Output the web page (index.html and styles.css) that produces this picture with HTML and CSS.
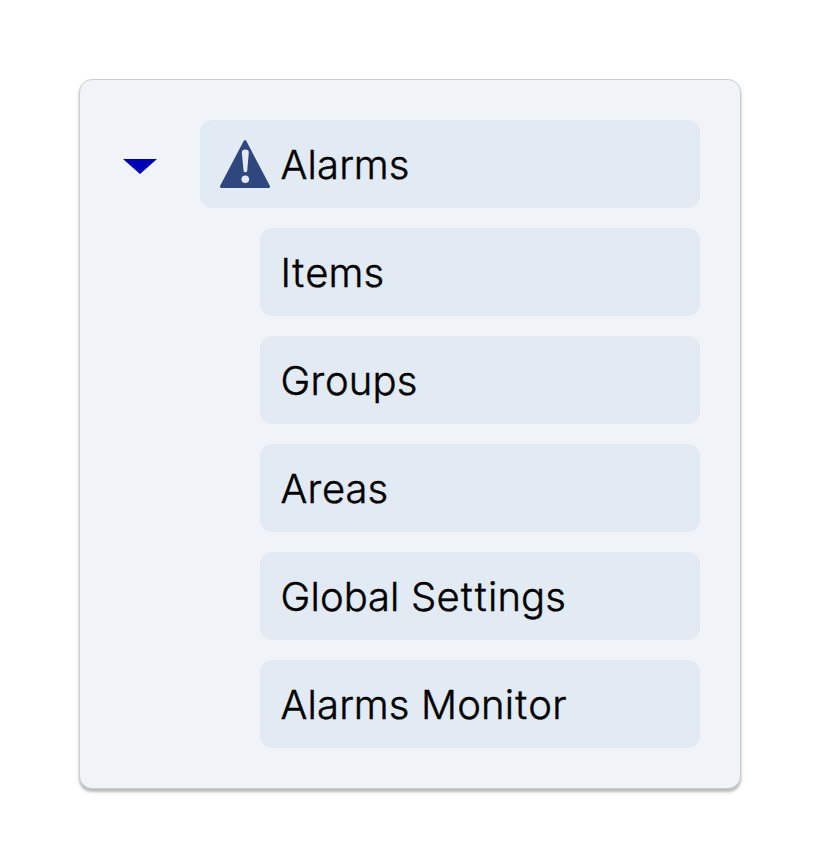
FILE: index.html
```html
<!DOCTYPE html>
<html lang="en">
<head>
<meta charset="utf-8">
<title>Alarms</title>
<link rel="stylesheet" href="styles.css">
</head>
<body>
<nav class="panel">
  <div class="toggle">
    <svg width="34" height="15" viewBox="0 0 34 15"><path d="M0 0H34L17 15Z" fill="#0000b8"/></svg>
  </div>
  <div class="tree">
    <div class="row parent">
      <svg class="icon" width="50" height="48" viewBox="0 0 50 48">
        <path d="M25 1.7L48.5 46.5H1.5Z" fill="#2f477f" stroke="#2f477f" stroke-width="3" stroke-linejoin="round"/>
        <path d="M21.8 12.5Q21.8 9.6 25.3 9.6T28.8 12.5L27.2 31Q27 32.3 25.3 32.3T23.6 31Z" fill="#e2eaf3"/>
        <circle cx="25.3" cy="39.2" r="3.8" fill="#e2eaf3"/>
      </svg>
      <span>Alarms</span>
    </div>
    <div class="row child"><span>I<span class="kern">t</span>ems</span></div>
    <div class="row child"><span>Groups</span></div>
    <div class="row child"><span>Areas</span></div>
    <div class="row child"><span>Global Se<span class="kern">t</span><span class="kern">t</span>ings</span></div>
    <div class="row child"><span>Alarms Moni<span class="kern">t</span>or</span></div>
  </div>
</nav>
</body>
</html>
```
FILE: styles.css
```css
* { box-sizing: border-box; }
body {
  margin: 0;
  padding: 79px;
  background: #fff;
  color: #000;
  font: 300 40px/48px Inter, sans-serif;
  font-kerning: none;
  letter-spacing: .15px;
  -webkit-text-stroke: .45px #000;
}
.panel {
  display: flex;
  width: 662px;
  height: 710px;
  padding: 40px;
  border: 1px solid #ccc;
  border-radius: 13px;
  background: #f0f4f9;
  box-shadow: 0 3px 3px rgba(0, 0, 0, .28);
}
.toggle {
  display: flex;
  flex: 0 0 80px;
  height: 88px;
  padding: 39px 0 0 3px;
}
.tree {
  display: flex;
  flex: 1;
  flex-direction: column;
  gap: 20px;
}
.row {
  display: flex;
  align-items: center;
  height: 88px;
  padding: 2px 20px 0;
  border-radius: 12px;
  background: #e2eaf3;
  white-space: nowrap;
}
.row > span { padding-left: .5px; }
.icon { margin-top: -2px; }
.kern { padding: 0 1px; }
.parent { gap: 10px; }
.child { margin-left: 60px; }
```
